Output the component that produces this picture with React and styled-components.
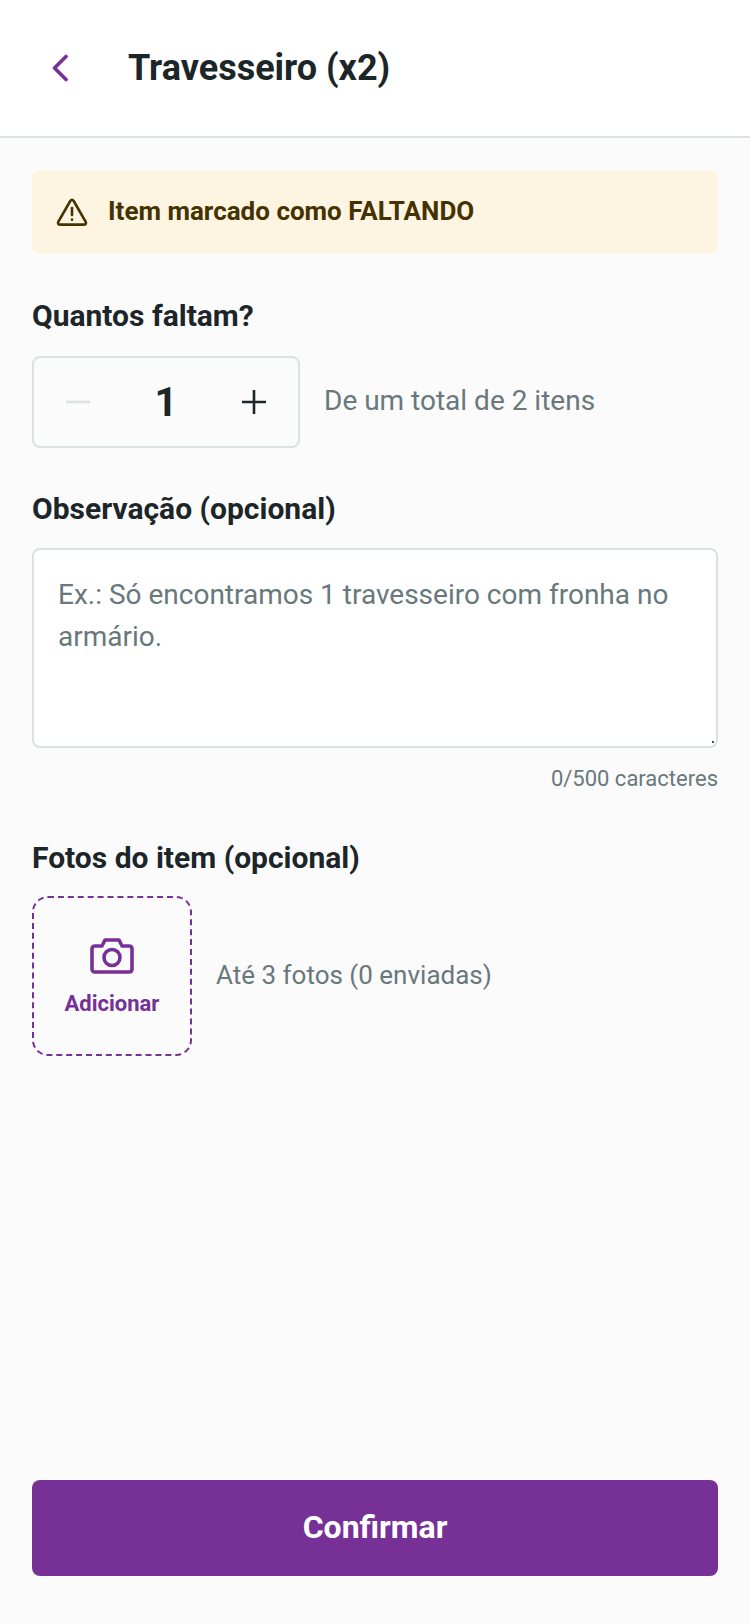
import styled, { createGlobalStyle } from 'styled-components';

const GlobalStyle = createGlobalStyle`
	html, body {
		margin: 0;
		padding: 0;
		background: #fbfbfb;
	}
	* {
		box-sizing: border-box;
	}
`;

const Page = styled.div`
	width: 750px;
	height: 1624px;
	display: flex;
	flex-direction: column;
	background: #fbfbfb;
	font-family: Roboto, sans-serif;
	color: #1c2629;
`;

const Header = styled.header`
	height: 138px;
	flex-shrink: 0;
	display: flex;
	align-items: center;
	padding-left: 48px;
	background: #fff;
	border-bottom: 2px solid #dce1e1;
`;

const BackButton = styled.div`
	width: 32px;
	height: 48px;
	margin-right: 48px;
	display: flex;
	align-items: center;
`;

const Title = styled.h1`
	margin: 0;
	font-size: 36px;
	font-weight: 700;
	line-height: 48px;
`;

const Content = styled.main`
	flex: 1;
	display: flex;
	flex-direction: column;
	padding: 32px 32px 48px;
`;

const Alert = styled.div`
	height: 84px;
	display: flex;
	align-items: center;
	gap: 20px;
	padding: 0 24px;
	background: #fdf5e2;
	border-radius: 8px;
	color: #453200;
	font-size: 26px;
	font-weight: 700;
`;

const AlertText = styled.span`
	margin-bottom: 3px;
`;

const Label = styled.h2`
	margin: ${(props) => props.$top}px 0 ${(props) => props.$bottom || 20}px;
	font-size: 30px;
	font-weight: 700;
	line-height: 40px;
`;

const Row = styled.div`
	display: flex;
	align-items: center;
	gap: 24px;
`;

const Stepper = styled.div`
	width: 268px;
	height: 92px;
	display: flex;
	align-items: center;
	justify-content: space-between;
	padding: 0 30px;
	border: 2px solid #dce1e1;
	border-radius: 8px;
`;

const StepIcon = styled.svg`
	width: 28px;
	height: 28px;
	stroke: ${(props) => (props.$disabled ? '#dce1e1' : '#1c2629')};
	stroke-width: 2.6;
	fill: none;
`;

const Count = styled.span`
	font-size: 40px;
	font-weight: 700;
`;

const Hint = styled.span`
	margin-bottom: ${(props) => props.$lift}px;
	font-size: ${(props) => props.$size}px;
	color: #68787b;
`;

const Field = styled.div`
	position: relative;

	&::after {
		content: '';
		position: absolute;
		right: 4px;
		bottom: 5px;
		width: 2px;
		height: 2px;
		background: #4a5558;
	}
`;

const TextArea = styled.textarea`
	display: block;
	width: 100%;
	height: 200px;
	padding: 24px 24px;
	background: #fff;
	border: 2px solid #dce1e1;
	border-radius: 8px;
	outline: none;
	resize: none;
	font-family: inherit;
	font-size: 28px;
	line-height: 42px;
	color: #1c2629;

	&::placeholder {
		color: #68787b;
		opacity: 1;
	}
`;

const CharCount = styled.div`
	margin-top: 17px;
	text-align: right;
	font-size: 22px;
	line-height: 28px;
	color: #68787b;
`;

const AddPhoto = styled.div`
	width: 160px;
	height: 160px;
	display: flex;
	flex-direction: column;
	align-items: center;
	justify-content: center;
	gap: 17px;
	padding-top: 2px;
	border: 2px dashed #763096;
	border-radius: 16px;
	color: #763096;
	font-size: 22px;
	font-weight: 700;
	line-height: 26px;
`;

const ConfirmButton = styled.button`
	height: 96px;
	margin-top: auto;
	padding: 0 0 2px;
	border: none;
	border-radius: 8px;
	background: #763096;
	color: #fff;
	font-family: inherit;
	font-size: 32px;
	font-weight: 700;
`;

const App = () => (
	<Page>
		<GlobalStyle />
		<Header>
			<BackButton>
				<svg width='20' height='32' viewBox='0 0 20 32' fill='none'>
					<path d='M18 4.5 L6.5 16 L18 27.5' stroke='#763096' strokeWidth='3.6' strokeLinecap='round' strokeLinejoin='round' />
				</svg>
			</BackButton>
			<Title>Travesseiro (x2)</Title>
		</Header>
		<Content>
			<Alert>
				<svg width='32' height='30' viewBox='0 0 32 30' fill='none' stroke='#453200' strokeWidth='2.6' strokeLinecap='round' strokeLinejoin='round'>
					<path d='M14.3 4 Q16 1.6 17.7 4 L29.6 24.6 Q30.8 27.6 28 27.6 H4 Q1.2 27.6 2.4 24.6 Z' />
					<path d='M16 11 V18' />
					<path d='M16 22.6 V22.8' />
				</svg>
				<AlertText>Item marcado como FALTANDO</AlertText>
			</Alert>
			<Label $top={42}>Quantos faltam?</Label>
			<Row>
				<Stepper>
					<StepIcon $disabled viewBox='0 0 28 28'>
						<path d='M2 14 H26' />
					</StepIcon>
					<Count>1</Count>
					<StepIcon viewBox='0 0 28 28'>
						<path d='M2 14 H26 M14 2 V26' />
					</StepIcon>
				</Stepper>
				<Hint $size={28} $lift={3}>De um total de 2 itens</Hint>
			</Row>
			<Label $top={41} $bottom={19}>Observação (opcional)</Label>
			<Field>
				<TextArea readOnly placeholder='Ex.: Só encontramos 1 travesseiro com fronha no armário.' />
			</Field>
			<CharCount>0/500 caracteres</CharCount>
			<Label $top={45} $bottom={18}>Fotos do item (opcional)</Label>
			<Row>
				<AddPhoto>
					<svg width='44' height='36' viewBox='0 0 44 36' fill='none' stroke='#763096' strokeWidth='3.6' strokeLinejoin='round'>
						<path d='M5 8 H12 L15 2 H29 L32 8 H39 Q42 8 42 11 V31 Q42 34 39 34 H5 Q2 34 2 31 V11 Q2 8 5 8 Z' />
						<circle cx='22' cy='19.5' r='8' />
					</svg>
					Adicionar
				</AddPhoto>
				<Hint $size={26} $lift={2}>Até 3 fotos (0 enviadas)</Hint>
			</Row>
			<ConfirmButton>Confirmar</ConfirmButton>
		</Content>
	</Page>
);

export default App;
